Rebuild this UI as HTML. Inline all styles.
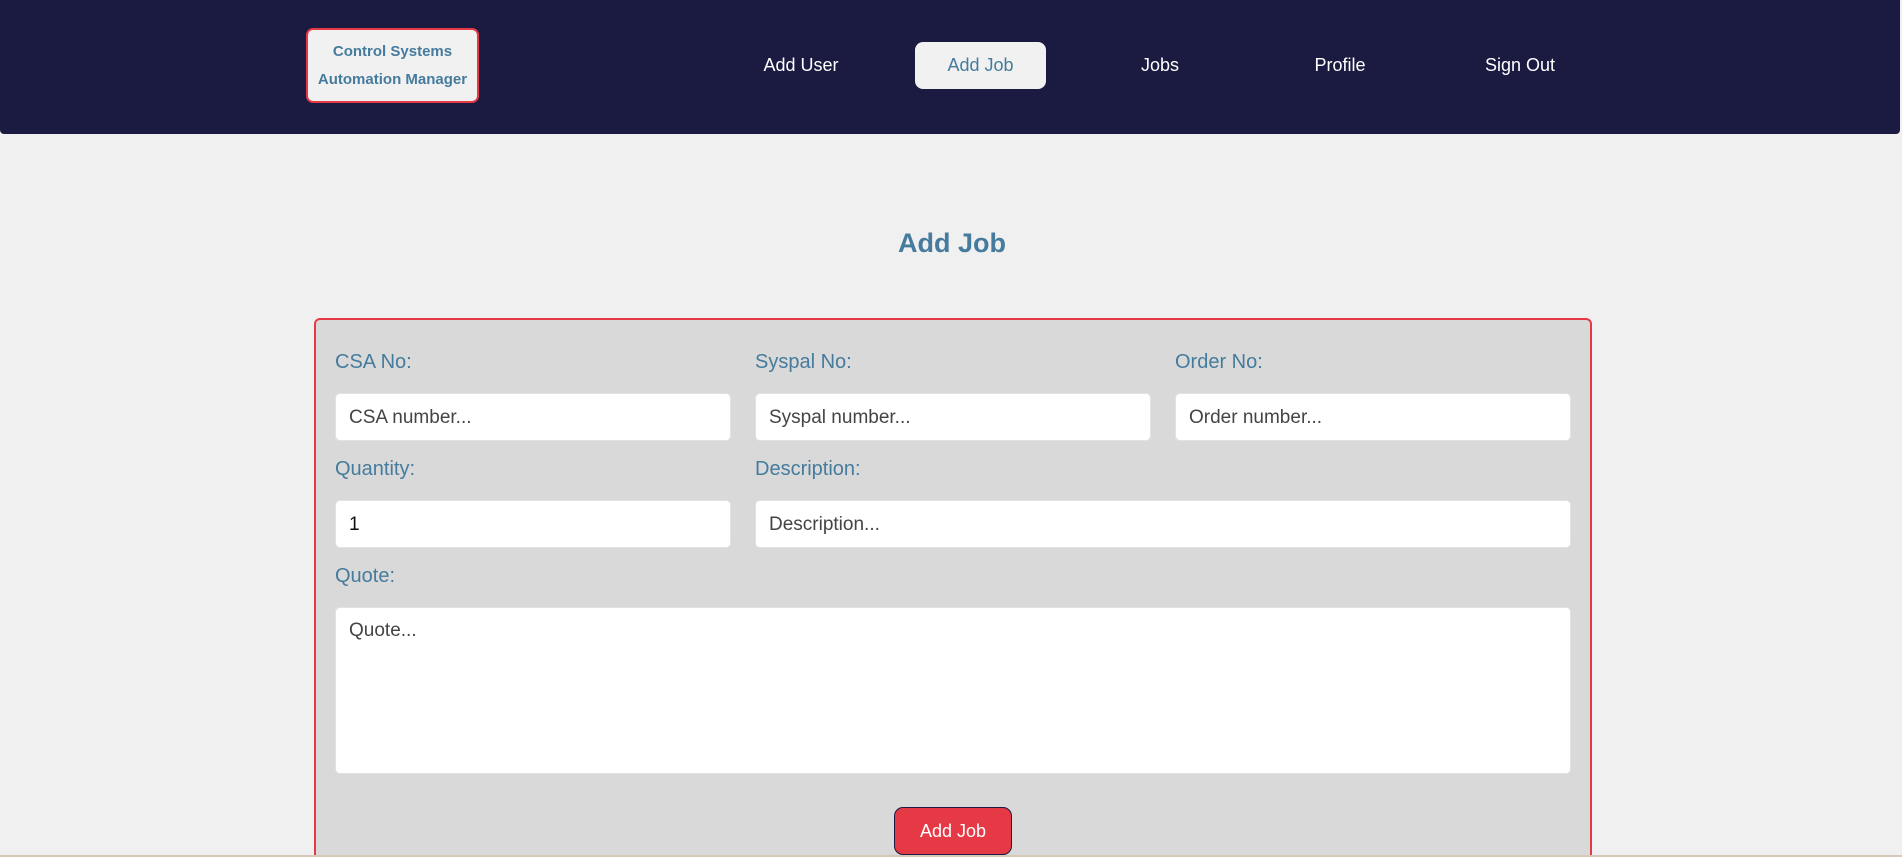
<!DOCTYPE html>
<html><head><style>
*{box-sizing:border-box;margin:0;padding:0}
html{width:1902px;height:857px;overflow:hidden}
body{width:1902px;height:857px;overflow:hidden;background:#f0f0f0;font-family:"Liberation Sans",sans-serif;position:relative}
.nav{position:absolute;left:0;top:0;width:1900px;height:134px;background:#1b1a40;border-radius:0 0 4px 4px}
.logo{position:absolute;left:306px;top:28px;width:173px;height:75px;background:#f1f1f1;border:2px solid #e63946;border-radius:7px;color:#457b9d;font-weight:bold;font-size:15px;text-align:center;line-height:28px;padding-top:8px}
.ni{position:absolute;top:55px;color:#fff;font-size:18px;transform:translateX(-50%)}
.nb{position:absolute;left:915px;top:42px;width:131px;height:47px;background:#f1f1f1;border-radius:8px;color:#457b9d;font-size:18px;text-align:center;line-height:47px}
h1{position:absolute;left:0;width:1904px;text-align:center;top:228px;font-size:27px;color:#457b9d}
.form{position:absolute;left:314px;top:318px;width:1278px;height:541px;background:#d9d9d9;border:2px solid #e63946;border-bottom:none;border-radius:6px 6px 0 0}
.lb{position:absolute;color:#457b9d;font-size:20px}
.in{position:absolute;background:#fff;border:1px solid #e2e2e2;border-radius:5px;font-size:19px;color:#444;padding-left:13px;line-height:48px}
.btn{position:absolute;left:894px;top:807px;width:118px;height:48px;background:#e63946;border:1px solid #1b1a40;border-radius:9px;color:#fff;font-size:18px;text-align:center;line-height:46px}
</style></head><body>
<div class="nav">
<div class="logo">Control Systems<br>Automation Manager</div>
<div class="ni" style="left:801px">Add User</div>
<div class="nb">Add Job</div>
<div class="ni" style="left:1160px">Jobs</div>
<div class="ni" style="left:1340px">Profile</div>
<div class="ni" style="left:1520px">Sign Out</div>
</div>
<h1>Add Job</h1>
<div class="form"></div>
<div class="lb" style="left:335px;top:351px">CSA No:</div>
<div class="lb" style="left:755px;top:351px">Syspal No:</div>
<div class="lb" style="left:1175px;top:351px">Order No:</div>
<div class="in" style="left:335px;top:393px;width:396px;height:48px">CSA number...</div>
<div class="in" style="left:755px;top:393px;width:396px;height:48px">Syspal number...</div>
<div class="in" style="left:1175px;top:393px;width:396px;height:48px">Order number...</div>
<div class="lb" style="left:335px;top:458px">Quantity:</div>
<div class="lb" style="left:755px;top:458px">Description:</div>
<div class="in" style="left:335px;top:500px;width:396px;height:48px;color:#111">1</div>
<div class="in" style="left:755px;top:500px;width:816px;height:48px">Description...</div>
<div class="lb" style="left:335px;top:565px">Quote:</div>
<div class="in" style="left:335px;top:607px;width:1236px;height:167px;line-height:46px">Quote...</div>
<div class="btn">Add Job</div>
<div style="position:absolute;left:0;top:855px;width:1902px;height:2px;background:#d8c8b8"></div>
</body></html>
